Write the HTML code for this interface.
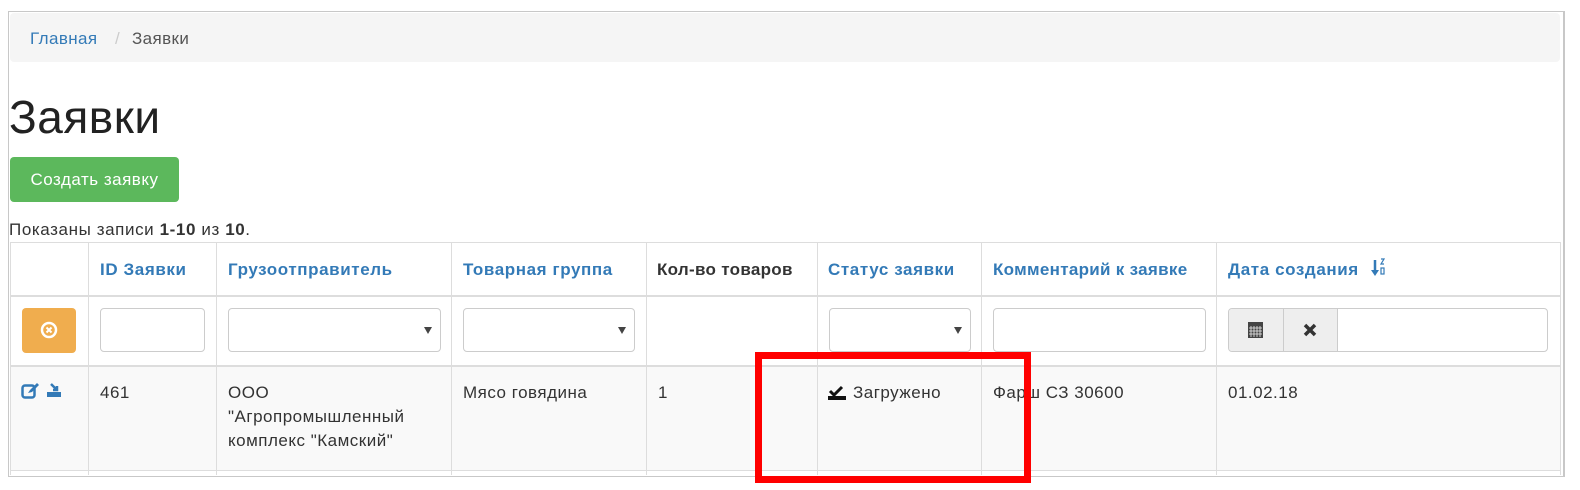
<!DOCTYPE html>
<html><head><meta charset="utf-8"><style>
body{margin:0;width:1580px;height:490px;background:#fff;font-family:"Liberation Sans",Arial,sans-serif;color:#333;position:relative;overflow:hidden}
.a{position:absolute}
.frame{left:8px;top:11px;width:1554px;height:464px;border:1px solid #c8c8c8;border-right-width:2px}
.bc{left:10px;top:13px;width:1550px;height:49px;background:#f5f5f5;border-radius:4px;font-size:17px;letter-spacing:0.4px}
.bc span{position:absolute;top:16px}
h1{position:absolute;left:9px;top:90px;margin:0;font-size:46px;font-weight:normal;color:#222;letter-spacing:0.5px}
.btn{left:10px;top:157px;width:169px;height:45px;background:#5cb85c;border-radius:4px;color:#fff;font-size:17px;letter-spacing:0.5px;line-height:45px;text-align:center}
.sum{left:9px;top:220px;font-size:17px;letter-spacing:0.6px}
.hl{height:0;border-top:2px solid #ddd}
.vl{width:0;border-left:1px solid #ddd}
.th{font-weight:bold;font-size:17px;letter-spacing:0.6px;color:#337ab7;top:260px}
.td{font-size:17px;letter-spacing:0.5px;top:381px;line-height:24px}
.inp{height:42px;border:1px solid #ccc;border-radius:4px;background:#fff;top:308px}
.caret{position:absolute;right:8px;top:18px;border-left:4px solid transparent;border-right:4px solid transparent;border-top:7px solid #444}
</style></head><body>
<div class="a frame"></div>
<div class="a bc"><span style="left:20px;color:#337ab7">Главная</span><span style="left:105px;color:#ccc">/</span><span style="left:122px;color:#555">Заявки</span></div>
<h1>Заявки</h1>
<div class="a btn">Создать заявку</div>
<div class="a sum">Показаны записи <b>1-10</b> из <b>10</b>.</div>

<div class="a" style="left:10px;top:367px;width:1550px;height:103px;background:#f9f9f9"></div>
<div class="a hl" style="left:10px;top:242px;width:1550px;border-top-width:1px"></div>
<div class="a hl" style="left:10px;top:295px;width:1550px"></div>
<div class="a hl" style="left:10px;top:365px;width:1550px"></div>
<div class="a hl" style="left:10px;top:470px;width:1550px;border-top-width:1px"></div>
<div class="a vl" style="left:10px;top:242px;height:233px"></div>
<div class="a vl" style="left:88px;top:242px;height:233px"></div>
<div class="a vl" style="left:216px;top:242px;height:233px"></div>
<div class="a vl" style="left:451px;top:242px;height:233px"></div>
<div class="a vl" style="left:646px;top:242px;height:233px"></div>
<div class="a vl" style="left:817px;top:242px;height:233px"></div>
<div class="a vl" style="left:981px;top:242px;height:233px"></div>
<div class="a vl" style="left:1216px;top:242px;height:233px"></div>
<div class="a vl" style="left:1560px;top:242px;height:233px"></div>

<div class="a th" style="left:100px">ID Заявки</div>
<div class="a th" style="left:228px">Грузоотправитель</div>
<div class="a th" style="left:463px">Товарная группа</div>
<div class="a th" style="left:657px;color:#333;letter-spacing:0.3px">Кол-во товаров</div>
<div class="a th" style="left:828px">Статус заявки</div>
<div class="a th" style="left:993px;letter-spacing:0.3px">Комментарий к заявке</div>
<div class="a th" style="left:1228px">Дата создания</div>
<div class="a" style="left:1371px;top:257px"><svg width="14" height="22"><path d="M4 3v13" stroke="#337ab7" stroke-width="2.5"/><path d="M0 13l4 6 4-6z" fill="#337ab7"/><path d="M10 2h3l-3 5h3" stroke="#337ab7" stroke-width="1.2" fill="none"/><rect x="10" y="11" width="3" height="6" fill="none" stroke="#337ab7" stroke-width="1.2"/></svg></div>

<div class="a" style="left:22px;top:308px;width:54px;height:45px;background:#f0ad4e;border-radius:4px"><svg width="54" height="45"><circle cx="27" cy="22" r="7" fill="none" stroke="#fff" stroke-width="2.5"/><path d="M24.5 19.5l5 5M29.5 19.5l-5 5" stroke="#fff" stroke-width="2"/></svg></div>
<div class="a inp" style="left:100px;width:103px"></div>
<div class="a inp" style="left:228px;width:211px"><i class="caret"></i></div>
<div class="a inp" style="left:463px;width:170px"><i class="caret"></i></div>
<div class="a inp" style="left:829px;width:140px"><i class="caret"></i></div>
<div class="a inp" style="left:993px;width:211px"></div>
<div class="a inp" style="left:1228px;width:318px;overflow:hidden">
<div class="a" style="left:0;top:0;width:54px;height:42px;background:#eee;border-right:1px solid #ccc"><svg width="54" height="42"><rect x="19" y="15" width="15" height="14" fill="#444"/><rect x="19" y="13" width="15" height="3" fill="#444"/><path d="M20 19h13M20 22h13M20 25h13M22 17v11M25 17v11M28 17v11M31 17v11" stroke="#eee" stroke-width="0.8"/></svg></div>
<div class="a" style="left:55px;top:0;width:53px;height:42px;background:#eee;border-right:1px solid #ccc"><svg width="53" height="42"><path d="M21 16l10 10M31 16l-10 10" stroke="#333" stroke-width="3.5"/></svg></div>
</div>

<div class="a" style="left:21px;top:381px"><svg width="48" height="20"><rect x="1.5" y="4.5" width="12" height="12" rx="2.5" fill="none" stroke="#337ab7" stroke-width="2.5"/><path d="M7 12l2-3 7-7 2 2-7 7z" fill="#337ab7"/><path d="M30 3l6 6M36 5v4h-4" stroke="#337ab7" stroke-width="2.5" fill="none"/><rect x="26" y="11" width="14" height="5" fill="#337ab7"/></svg></div>
<div class="a td" style="left:100px">461</div>
<div class="a td" style="left:228px">ООО<br>"Агропромышленный<br>комплекс "Камский"</div>
<div class="a td" style="left:463px">Мясо говядина</div>
<div class="a td" style="left:658px">1</div>
<div class="a" style="left:827px;top:385px"><svg width="20" height="16"><path d="M3 6l4 4 8-8" stroke="#111" stroke-width="3" fill="none"/><rect x="1" y="11" width="18" height="4" fill="#111"/></svg></div>
<div class="a td" style="left:853px">Загружено</div>
<div class="a td" style="left:993px">Фарш СЗ 30600</div>
<div class="a td" style="left:1228px">01.02.18</div>

<div class="a" style="left:755px;top:352px;width:262px;height:117px;border:7px solid #f00"></div>
</body></html>
